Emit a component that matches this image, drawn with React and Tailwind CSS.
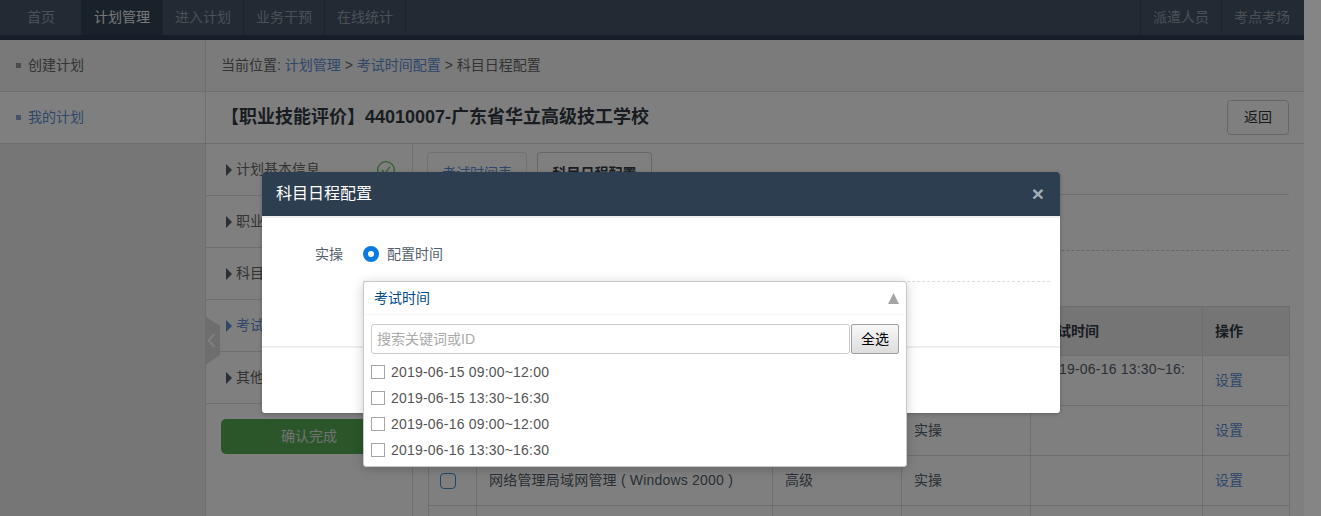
import React from "react";

const leftNav = ["首页", "计划管理", "进入计划", "业务干预", "在线统计"];
const rightNav = ["派遣人员", "考点考场"];
const steps = [
  { label: "计划基本信息", done: true },
  { label: "职业工种信息" },
  { label: "科目信息配置" },
  { label: "考试时间配置", active: true },
  { label: "其他信息配置" },
];
const rows = [
  { name: "", level: "", type: "", time: "2019-06-16 13:30~16:30", box: false },
  { name: "", level: "", type: "实操", time: "", box: false },
  { name: "网络管理局域网管理 ( Windows 2000 )", level: "高级", type: "实操", time: "", box: true },
];
const slots = ["2019-06-15 09:00~12:00", "2019-06-15 13:30~16:30", "2019-06-16 09:00~12:00", "2019-06-16 13:30~16:30"];

function NavItem({ label, active, side }) {
  return (
    <div
      className={`w-[81px] h-[35px] flex items-center justify-center border-[#3a4757] ${side === "right" ? "border-l" : "border-r"} ${active ? "bg-[#324256] text-[#f0f0f0]" : "text-[#98a0a8]"}`}
    >
      {label}
    </div>
  );
}

function SideItem({ label, active }) {
  return (
    <div className={`h-[52px] flex items-center pl-[16px] gap-[7px] border-b border-[#dcdcdc] ${active ? "bg-white text-[#5e8ed6]" : "bg-[#f2f3f2] text-[#666666]"}`}>
      <span className={`w-[5px] h-[5px] ${active ? "bg-[#8ea6d0]" : "bg-[#999999]"}`} />
      <span>{label}</span>
    </div>
  );
}

function StepRow({ label, done, active }) {
  return (
    <div className={`h-[52px] flex items-center pl-[20px] pr-[17px] border-b border-[#dcdcdc] ${active ? "text-[#5e8ed6]" : "text-[#666666]"}`}>
      <svg width="6" height="12" viewBox="0 0 6 12" className="mr-[4px] shrink-0">
        <path d="M0 0 L6 6 L0 12 Z" fill={active ? "#5e8ed6" : "#555f6b"} />
      </svg>
      <span className="flex-1">{label}</span>
      {done && (
        <svg width="18" height="18" viewBox="0 0 18 18" fill="none" stroke="#5cb85c" strokeWidth="1.2">
          <circle cx="9" cy="9" r="8.3" />
          <path d="M5 9 L8 12.5 L13 5.5" />
        </svg>
      )}
    </div>
  );
}

function Slot({ text }) {
  return (
    <div className="h-[26px] flex items-center gap-[6px] text-[#555555]">
      <span className="w-[14px] h-[14px] border border-[#a6a6a6] bg-white" />
      <span className="tracking-[0.2px]">{text}</span>
    </div>
  );
}

export default function App() {
  return (
    <div className="relative w-[1321px] h-[516px] overflow-hidden bg-[#858585] text-[14px] font-['Liberation_Sans','Noto_Sans_CJK_SC',sans-serif]">
      <div className="w-[1304px] h-[516px] bg-white">
        {/* top bar */}
        <header className="h-[40px] bg-[#445669] border-b-[5px] border-[#2e3a50] flex justify-between pl-[1px] pr-[2px]">
          <nav className="flex">
            {leftNav.map((n, i) => (
              <NavItem key={n} label={n} active={i === 1} />
            ))}
          </nav>
          <nav className="flex">
            {rightNav.map((n) => (
              <NavItem key={n} label={n} side="right" />
            ))}
          </nav>
        </header>

        <div className="flex h-[476px]">
          {/* sidebar */}
          <aside className="w-[206px] shrink-0 bg-[#eaeceb] border-r border-[#dcdcdc]">
            <SideItem label="创建计划" />
            <SideItem label="我的计划" active />
          </aside>

          {/* main */}
          <main className="flex-1 min-w-0">
            <div className="h-[52px] px-[15px] flex items-center border-b border-[#dcdcdc] bg-[#f6f6f6] text-[#666666]">
              当前位置:&nbsp;<a className="text-[#5e8ed6]">计划管理</a>&nbsp;&gt;&nbsp;<a className="text-[#5e8ed6]">考试时间配置</a>&nbsp;&gt;&nbsp;科目日程配置
            </div>
            <div className="h-[52px] pl-[15px] pr-[15px] flex items-center justify-between border-b border-[#dcdcdc]">
              <h1 className="text-[18px] font-bold text-[#333a44]">【职业技能评价】44010007-广东省华立高级技工学校</h1>
              <button className="w-[62px] h-[35px] rounded-[4px] border border-[#cccccc] text-[#333333]">返回</button>
            </div>

            <div className="flex">
              {/* steps */}
              <div className="relative w-[207px] h-[372px] shrink-0 border-r border-[#dcdcdc]">
                {steps.map((s) => (
                  <StepRow key={s.label} {...s} />
                ))}
                <div className="px-[15px] pt-[15px]">
                  <button className="w-full h-[35px] rounded-[5px] bg-[#55ad55] text-[#e4e4e4]">确认完成</button>
                </div>
                <svg width="15" height="49" viewBox="0 0 15 49" className="absolute -left-[1px] top-[172px]">
                  <path d="M0 0 L15 10 L15 39 L0 49 Z" fill="#dcdcdc" />
                  <path d="M9.5 18 L3.5 24.5 L9.5 31" fill="none" stroke="#ffffff" strokeWidth="2" />
                </svg>
              </div>

              {/* content */}
              <div className="flex-1 min-w-0 px-[15px] pt-[8px]">
                <div className="h-[43px] flex items-end gap-[10px] border-b border-[#dcdcdc]">
                  <div className="-ml-[1px] w-[100px] h-[42px] flex items-center justify-center rounded-t-[4px] border border-b-0 border-[#e3e3e3] text-[#5e8ed6]">考试时间表</div>
                  <div className="w-[115px] h-[42px] flex items-center justify-center rounded-t-[4px] border border-b-0 border-[#cfcfcf] font-bold text-[#333a44]">科目日程配置</div>
                </div>
                <div className="h-[56px] border-b border-dashed border-[#cccccc]" />
                <table className="mt-[55px] w-[861px] table-fixed border-collapse text-[#555f6b]">
                  <colgroup>
                    <col className="w-[48px]" />
                    <col className="w-[296px]" />
                    <col className="w-[129px]" />
                    <col className="w-[129px]" />
                    <col className="w-[172px]" />
                    <col className="w-[87px]" />
                  </colgroup>
                  <thead>
                    <tr className="h-[49px] bg-[#eaeaea] font-bold text-left text-[#333a44]">
                      <th className="border border-[#dcdcdc]" />
                      <th className="border border-[#dcdcdc] px-[12px]" />
                      <th className="border border-[#dcdcdc] px-[12px]" />
                      <th className="border border-[#dcdcdc] px-[12px]" />
                      <th className="border border-[#dcdcdc] px-[12px]">考试时间</th>
                      <th className="border border-[#dcdcdc] px-[12px]">操作</th>
                    </tr>
                  </thead>
                  <tbody>
                    {rows.map((r, i) => (
                      <tr key={i} className="h-[50px]">
                        <td className="border border-[#dcdcdc] pl-[11px]">
                          {r.box && <span className="block w-[16px] h-[16px] rounded-[4px] border border-[#3b8fd9]" />}
                        </td>
                        <td className="border border-[#dcdcdc] px-[12px] tracking-[0.2px]">{r.name}</td>
                        <td className="border border-[#dcdcdc] px-[12px]">{r.level}</td>
                        <td className="border border-[#dcdcdc] px-[12px]">{r.type}</td>
                        <td className="border border-[#dcdcdc] px-[12px] break-all align-top pt-[3px] tracking-[0.2px]">{r.time}</td>
                        <td className="border border-[#dcdcdc] px-[12px] text-[#5e8ed6]">设置</td>
                      </tr>
                    ))}
                    <tr className="h-[50px]">
                      <td className="border border-[#dcdcdc]" />
                      <td className="border border-[#dcdcdc]" />
                      <td className="border border-[#dcdcdc]" />
                      <td className="border border-[#dcdcdc]" />
                      <td className="border border-[#dcdcdc]" />
                      <td className="border border-[#dcdcdc]" />
                    </tr>
                  </tbody>
                </table>
              </div>
            </div>
          </main>
        </div>
      </div>

      {/* scrim */}
      <div className="absolute left-0 top-0 bottom-0 w-[1304px] bg-black/50" />

      {/* modal */}
      <div className="absolute left-[262px] top-[172px] w-[798px] h-[241px] rounded-[3px] bg-white shadow-[0_1px_4px_rgba(0,0,0,0.25)]">
        <div className="h-[44px] bg-[#2c3e50] rounded-t-[3px] flex items-center justify-between pl-[14px] pr-[16px]">
          <span className="text-[16px] text-white">科目日程配置</span>
          <span className="-mt-[2px] text-[21px] font-bold leading-none text-[#a3adb8]">×</span>
        </div>
        <div className="h-[132px] border-t-2 border-t-[#eeeeee] border-b-2 border-b-[#eeeeee] pt-[27px] pl-[53px] pr-[10px]">
          <div className="flex items-center h-[18px]">
            <span className="w-[48px] text-[#555f6b]">实操</span>
            <span className="w-[16px] h-[16px] rounded-full border-[5px] border-[#0a7ae0] bg-white" />
            <span className="ml-[8px] text-[#555f6b]">配置时间</span>
          </div>
          <div className="mt-[18px] ml-[48px] border-t border-dashed border-[#dddddd]" />
        </div>

        {/* dropdown */}
        <div className="absolute left-[101px] top-[109px] w-[544px] h-[186px] rounded-[3px] bg-white border border-[#c8c8c8] shadow-[0_2px_12px_rgba(0,0,0,0.2)] px-[7px]">
          <div className="h-[33px] -mx-[7px] pl-[10px] pr-[7px] flex items-center justify-between border-b border-[#f7f7f7]">
            <span className="text-[#004a8c]">考试时间</span>
            <svg width="11" height="11" viewBox="0 0 11 11"><path d="M5.5 0 L11 11 L0 11 Z" fill="#a5a5a5" /></svg>
          </div>
          <div className="mt-[9px] flex h-[30px]">
            <input
              readOnly
              placeholder="搜索关键词或ID"
              className="w-[480px] h-[30px] rounded-[3px] border border-[#cccccc] px-[5px] outline-none placeholder:text-[#aaaaaa]"
            />
            <button className="w-[48px] h-[30px] ml-[1px] rounded-[2px] border border-[#a0a0a0] bg-gradient-to-b from-[#f8f8f8] to-[#dddddd] text-black">全选</button>
          </div>
          <div className="mt-[5px]">
            {slots.map((s) => (
              <Slot key={s} text={s} />
            ))}
          </div>
        </div>
      </div>
    </div>
  );
}
